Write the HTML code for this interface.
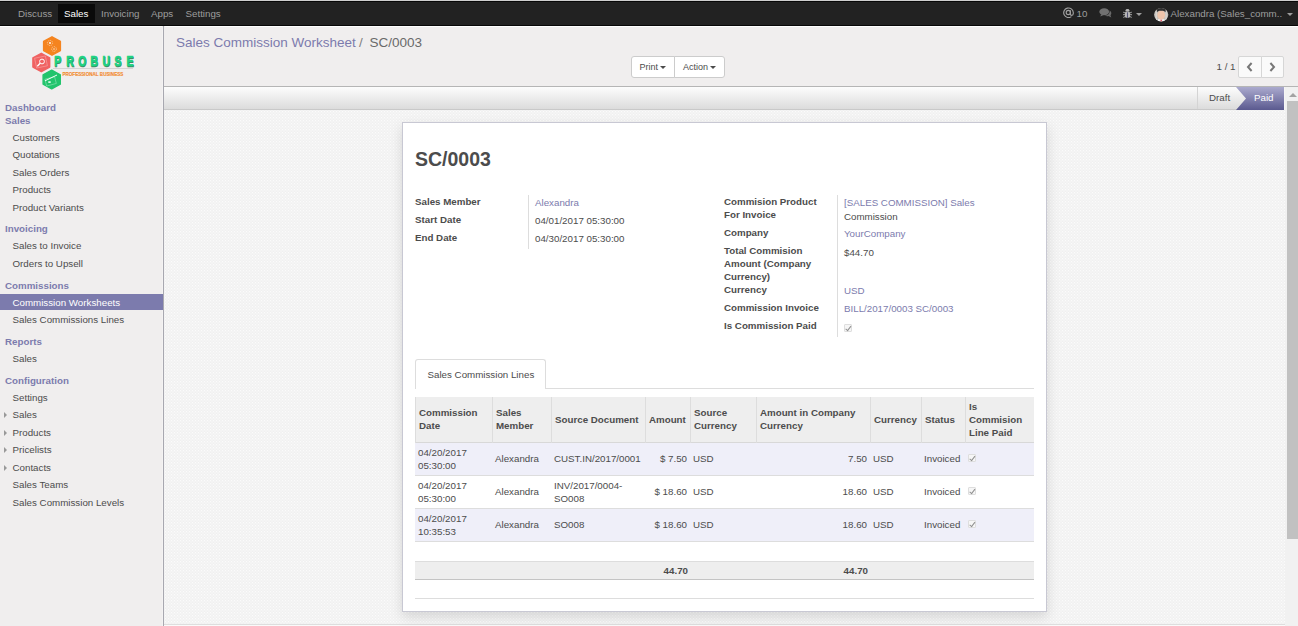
<!DOCTYPE html>
<html><head><meta charset="utf-8">
<style>
*{box-sizing:border-box}
html,body{margin:0;padding:0;width:1298px;height:626px;overflow:hidden;background:#f5f5f5;font-family:"Liberation Sans",sans-serif;font-size:9.75px;color:#4c4c4c}
.a{position:absolute}
.t{position:absolute;white-space:nowrap;line-height:13px;font-size:9.75px}
.b{font-weight:bold}
.p{color:#7c7bad}
/* top bar */
#top0{left:0;top:0;width:1298px;height:1px;background:#cfcfcf}
#nav{left:0;top:1px;width:1298px;height:25px;background:#222;border-top:1px solid #080808;border-bottom:1px solid #080808}
#navw{left:0;top:26px;width:1298px;height:1px;background:#fff}
.nt{position:absolute;top:7px;line-height:13px;color:#9d9d9d;white-space:nowrap}
/* sidebar */
#side{left:0;top:27px;width:163px;height:599px;background:#f0eeee}
#sideb{left:163px;top:26px;width:1px;height:600px;background:#a8a8b0;box-shadow:1px 0 0 #f4f3f3,-1px 0 0 #f4f3f3}
.sh{color:#7c7bad;font-weight:bold}
.si{color:#4c4c4c}
/* control panel */
#cp{left:164px;top:27px;width:1134px;height:60px;background:#f0eeee;border-bottom:1px solid #b5b5b5}
.btn{position:absolute;background:#fff;border:1px solid #ccc;height:22px}
.caret{display:inline-block;width:0;height:0;border-top:3px solid #4c4c4c;border-left:3px solid transparent;border-right:3px solid transparent;vertical-align:middle;margin-left:2px;position:relative;top:-1px}
/* statusbar */
#sb{left:164px;top:87px;width:1120px;height:23px;background:linear-gradient(#fdfdfd,#dcdcdc);border-bottom:1px solid #c9c9c9}
/* content bg */
#content{left:164px;top:110px;width:1121px;height:516px;
 background-color:#f4f4f4;
 }
#scroll{left:1285px;top:87px;width:13px;height:539px;background:#f1f1f1}
#thumb{left:1287px;top:101px;width:11px;height:438px;background:#c1c1c1}
/* sheet */
#sheet{left:402px;top:122px;width:645px;height:490px;background:#fff;border:1px solid #c8c8d3;box-shadow:0 5px 12px rgba(0,0,0,0.13)}
.vsep{position:absolute;width:1px;background:#ddd}
.hl{position:absolute;height:1px;background:#ddd}
.vd{position:absolute;width:1px;background:#ddd}
.chk{position:absolute;width:8px;height:8px;border:1px solid #dedede;background:#f6f6f6;border-radius:1px}
.chk:after{content:"";position:absolute;left:2.2px;top:-0.5px;width:2.2px;height:4.5px;border:solid #8f8f8f;border-width:0 1.4px 1.4px 0;transform:rotate(38deg)}
</style></head><body>

<div id="top0" class="a"></div>
<div id="nav" class="a"></div>
<div id="navw" class="a"></div>
<div class="a" style="left:58px;top:4px;width:37px;height:19px;background:#0a0a0a"></div>
<div class="nt" style="left:18px">Discuss</div>
<div class="nt" style="left:64px;color:#fff">Sales</div>
<div class="nt" style="left:101px">Invoicing</div>
<div class="nt" style="left:151px">Apps</div>
<div class="nt" style="left:185.5px">Settings</div>

<!-- right side of nav -->
<svg class="a" style="left:1063px;top:7px" width="11" height="11" viewBox="0 0 11 11">
 <circle cx="5.3" cy="5.5" r="2.1" fill="none" stroke="#a0a0a0" stroke-width="1.15"/>
 <path d="M8.4 9.6 A4.8 4.8 0 1 1 10.3 5.5 L10.3 6.4 C10.3 7.7 9.5 8.3 8.6 8.3 C7.7 8.3 7.4 7.6 7.4 6.9 L7.4 3.2" fill="none" stroke="#a0a0a0" stroke-width="1.15"/>
</svg>
<div class="nt" style="left:1076.5px;top:7px">10</div>
<svg class="a" style="left:1098.5px;top:8.3px" width="13" height="10" viewBox="0 0 13 10">
 <ellipse cx="5.2" cy="3.7" rx="4.9" ry="3.5" fill="#717171"/>
 <path d="M2.2 6.3 L1.3 8.6 L4.6 7" fill="#717171"/>
 <path d="M10.6 2.6 C12.5 3.6 13 5.9 11.5 7.3 L12.3 9.5 L9.5 8.1 C8.2 8.5 6.7 8.2 5.8 7.6 C8.8 7.6 11 5.6 10.6 2.6Z" fill="#6a6a6a"/>
</svg>
<svg class="a" style="left:1123px;top:8.6px" width="9" height="9" viewBox="0 0 9 9">
 <ellipse cx="4.5" cy="1.3" rx="1.9" ry="1.2" fill="#b4b4b4"/>
 <rect x="2" y="2.5" width="5" height="6.3" rx="1.4" fill="#b4b4b4"/>
 <path d="M0.2 3.2 L2 3.9 M8.8 3.2 L7 3.9 M0 5.7 L2 5.7 M9 5.7 L7 5.7 M0.3 8.4 L2 7.6 M8.7 8.4 L7 7.6" stroke="#b4b4b4" stroke-width="0.9"/>
 <path d="M4.5 3.3 L4.5 8.8" stroke="#4a4a70" stroke-width="0.9"/>
</svg>
<div class="a" style="left:1136px;top:13px;width:0;height:0;border-top:3.5px solid #9d9d9d;border-left:3.5px solid transparent;border-right:3.5px solid transparent"></div>
<svg class="a" style="left:1153.7px;top:7.5px" width="15" height="14" viewBox="0 0 15 14">
 <defs><clipPath id="av"><ellipse cx="7.2" cy="6.8" rx="7.1" ry="6.8"/></clipPath></defs>
 <ellipse cx="7.2" cy="6.8" rx="7.1" ry="6.8" fill="#c4c0bb"/>
 <g clip-path="url(#av)">
  <path d="M3.2 13.6 L4 11.2 L10.4 11.2 L11.2 13.6Z" fill="#f4f4f4"/>
  <rect x="6.4" y="11.6" width="1.6" height="2.2" fill="#e05a6a"/>
  <ellipse cx="7.2" cy="7" rx="3.9" ry="4.6" fill="#efc5ab"/>
  <path d="M2.9 4.5 L2.9 -1 L11.6 -1 L11.6 4.5 C11 3.3 10 2.8 7.2 2.8 C4.4 2.8 3.4 3.3 2.9 4.5Z" fill="#2e2e2e"/>
  <path d="M1.6 2 L3 4.5 L3 12 L1.5 12Z M12.8 2 L11.4 4.5 L11.4 12 L12.9 12Z" fill="#d8d4cf"/>
 </g>
</svg>
<div class="nt" style="left:1170.5px;top:7px">Alexandra (Sales_comm..</div>
<div class="a" style="left:1287px;top:13px;width:0;height:0;border-top:3.5px solid #9d9d9d;border-left:3.5px solid transparent;border-right:3.5px solid transparent"></div>

<!-- sidebar -->
<div id="side" class="a"></div>
<div id="sideb" class="a"></div>
<svg class="a" style="left:25px;top:32px" width="115" height="60" viewBox="25 32 115 60">
 <polygon points="52,36.8 60.4,41.4 60.4,50.6 52,55.2 43.6,50.6 43.6,41.4" fill="#f5841f" stroke="#f5841f" stroke-width="1.4" stroke-linejoin="round"/>
 <polygon points="41.3,53.3 49.7,57.9 49.7,67.1 41.3,71.7 32.9,67.1 32.9,57.9" fill="#f06262" stroke="#f06262" stroke-width="1.4" stroke-linejoin="round"/>
 <polygon points="51.7,70.1 60.3,74.8 60.3,84.2 51.7,88.9 43.1,84.2 43.1,74.8" fill="#22c46c" stroke="#22c46c" stroke-width="1.4" stroke-linejoin="round"/>
 <g fill="none" stroke="#fbc390" stroke-width="1">
  <circle cx="50" cy="43" r="2.6" stroke-dasharray="1.2 0.8"/>
  <circle cx="54" cy="49" r="2.4" stroke-dasharray="1.2 0.8"/>
 </g>
 <circle cx="50" cy="43" r="0.9" fill="#fff"/>
 <circle cx="54" cy="49" r="0.8" fill="#fde2c8"/>
 <g fill="none" stroke="#f7a3a3" stroke-width="0.6">
  <rect x="35.5" y="57" width="11" height="10" transform="rotate(-12 41 62)"/>
 </g>
 <circle cx="42" cy="61.5" r="2.4" fill="none" stroke="#fff" stroke-width="1"/>
 <path d="M40.2 63.3 L37.3 66.2" stroke="#fff" stroke-width="1.3"/>
 <g fill="none" stroke="#9fe8c0" stroke-width="0.5">
  <rect x="45.5" y="78" width="10" height="7" transform="rotate(-15 50 81)"/>
 </g>
 <path d="M45 80.8 L57 75" stroke="#f0fff6" stroke-width="1"/>
 <rect x="48.3" y="81.3" width="2.4" height="1.6" fill="#e8fff2"/>
 <g font-family="Liberation Sans" font-weight="bold" font-size="14.4" transform="scale(0.72,1)">
  <text x="75.8" y="66.9" fill="#3a8a62" stroke="#3a8a62" stroke-width="0.7">P</text>
  <text x="75.3" y="66.2" fill="#20d383" stroke="#20d383" stroke-width="0.7">P</text>
  <text x="92.6" y="66.9" fill="#3a8a62" stroke="#3a8a62" stroke-width="0.7">R</text>
  <text x="92.1" y="66.2" fill="#20d383" stroke="#20d383" stroke-width="0.7">R</text>
  <text x="109.2" y="66.9" fill="#3a8a62" stroke="#3a8a62" stroke-width="0.7">O</text>
  <text x="108.8" y="66.2" fill="#20d383" stroke="#20d383" stroke-width="0.7">O</text>
  <text x="126.1" y="66.9" fill="#3a8a62" stroke="#3a8a62" stroke-width="0.7">B</text>
  <text x="125.6" y="66.2" fill="#20d383" stroke="#20d383" stroke-width="0.7">B</text>
  <text x="142.9" y="66.9" fill="#3a8a62" stroke="#3a8a62" stroke-width="0.7">U</text>
  <text x="142.4" y="66.2" fill="#20d383" stroke="#20d383" stroke-width="0.7">U</text>
  <text x="159.5" y="66.9" fill="#3a8a62" stroke="#3a8a62" stroke-width="0.7">S</text>
  <text x="159.0" y="66.2" fill="#20d383" stroke="#20d383" stroke-width="0.7">S</text>
  <text x="176.3" y="66.9" fill="#3a8a62" stroke="#3a8a62" stroke-width="0.7">E</text>
  <text x="175.8" y="66.2" fill="#20d383" stroke="#20d383" stroke-width="0.7">E</text>
 </g>
 <rect x="53" y="68" width="80" height="1" fill="#d4d4d4"/>
 <text x="62.4" y="76.3" font-family="Liberation Sans" font-size="6" font-weight="bold" fill="#f28a2e" stroke="#f28a2e" stroke-width="0.15" textLength="61" lengthAdjust="spacingAndGlyphs">PROFESSIONAL BUSINESS</text>
</svg>

<div class="t sh" style="left:5px;top:100.6px">Dashboard</div>
<div class="t sh" style="left:5px;top:114px">Sales</div>
<div class="t si" style="left:12.5px;top:131px">Customers</div>
<div class="t si" style="left:12.5px;top:148px">Quotations</div>
<div class="t si" style="left:12.5px;top:166px">Sales Orders</div>
<div class="t si" style="left:12.5px;top:183px">Products</div>
<div class="t si" style="left:12.5px;top:201px">Product Variants</div>
<div class="t sh" style="left:5px;top:222px">Invoicing</div>
<div class="t si" style="left:12.5px;top:239px">Sales to Invoice</div>
<div class="t si" style="left:12.5px;top:257px">Orders to Upsell</div>
<div class="t sh" style="left:5px;top:279px">Commissions</div>
<div class="a" style="left:0;top:294px;width:163px;height:16px;background:#7c7bad"></div>
<div class="t" style="left:12.5px;top:296px;color:#fff">Commission Worksheets</div>
<div class="t si" style="left:12.5px;top:313px">Sales Commissions Lines</div>
<div class="t sh" style="left:5px;top:335px">Reports</div>
<div class="t si" style="left:12.5px;top:352px">Sales</div>
<div class="t sh" style="left:5px;top:374px">Configuration</div>
<div class="t si" style="left:12.5px;top:390.5px">Settings</div>
<div class="t si" style="left:12.5px;top:407.5px">Sales</div>
<div class="t si" style="left:12.5px;top:425.5px">Products</div>
<div class="t si" style="left:12.5px;top:442.5px">Pricelists</div>
<div class="t si" style="left:12.5px;top:460.5px">Contacts</div>
<div class="t si" style="left:12.5px;top:477.5px">Sales Teams</div>
<div class="t si" style="left:12.5px;top:495.5px">Sales Commission Levels</div>
<div class="a" style="left:4px;top:412px;width:0;height:0;border-left:3px solid #999;border-top:3px solid transparent;border-bottom:3px solid transparent"></div>
<div class="a" style="left:4px;top:430px;width:0;height:0;border-left:3px solid #999;border-top:3px solid transparent;border-bottom:3px solid transparent"></div>
<div class="a" style="left:4px;top:447px;width:0;height:0;border-left:3px solid #999;border-top:3px solid transparent;border-bottom:3px solid transparent"></div>
<div class="a" style="left:4px;top:465px;width:0;height:0;border-left:3px solid #999;border-top:3px solid transparent;border-bottom:3px solid transparent"></div>

<!-- control panel -->
<div id="cp" class="a"></div>
<div class="t p" style="left:176px;top:34px;font-size:13.5px;line-height:18px">Sales Commission Worksheet<span style="color:#808080;margin-left:-0.7px"> / </span><span style="color:#6a6a6a;margin-left:3px">SC/0003</span></div>
<div class="btn" style="left:631px;top:56px;width:44px;border-radius:3px 0 0 3px"></div>
<div class="btn" style="left:674px;top:56px;width:51px;border-radius:0 3px 3px 0"></div>
<div class="t" style="left:639.5px;top:60.5px;font-size:9px">Print</div><div class="a" style="left:660px;top:66px;width:0;height:0;border-top:3px solid #4c4c4c;border-left:3px solid transparent;border-right:3px solid transparent"></div>
<div class="t" style="left:683px;top:60.5px;font-size:9px">Action</div><div class="a" style="left:710px;top:66px;width:0;height:0;border-top:3px solid #4c4c4c;border-left:3px solid transparent;border-right:3px solid transparent"></div>
<div class="t" style="left:1216.5px;top:59.5px">1 / 1</div>
<div class="btn" style="left:1238px;top:56px;width:24px;height:22px;border-radius:2px 0 0 2px;background:#fafafa;border-color:#d6d6d6"></div>
<div class="btn" style="left:1261px;top:56px;width:23px;height:22px;border-radius:0 2px 2px 0;background:#fafafa;border-color:#d6d6d6"></div>
<svg class="a" style="left:1246px;top:62.4px" width="8" height="10" viewBox="0 0 8 10"><path d="M5.6 1 L2 5 L5.6 9" fill="none" stroke="#777" stroke-width="2"/></svg>
<svg class="a" style="left:1268px;top:62.4px" width="8" height="10" viewBox="0 0 8 10"><path d="M2.4 1 L6 5 L2.4 9" fill="none" stroke="#777" stroke-width="2"/></svg>

<!-- statusbar -->
<div id="sb" class="a"></div>
<div class="a" style="left:1197px;top:87px;width:1px;height:22px;background:#d4d4d4"></div>
<svg class="a" style="left:1236px;top:87px" width="48" height="23" viewBox="0 0 48 23">
 <defs><linearGradient id="pg" x1="0" y1="0" x2="0" y2="1"><stop offset="0" stop-color="#abaace"/><stop offset="1" stop-color="#5a598f"/></linearGradient></defs>
 <path d="M0 0 L48 0 L48 23 L0 23 L10 11.5Z" fill="url(#pg)"/>
</svg>
<div class="t" style="left:1209px;top:91px">Draft</div>
<div class="t" style="left:1254px;top:91px;color:#fff">Paid</div>

<!-- content -->
<svg id="content" class="a" width="1121" height="516" shape-rendering="crispEdges">
 <defs><pattern id="bgp" x="1" y="1" width="3" height="3" patternUnits="userSpaceOnUse">
  <rect width="3" height="3" fill="#f4f4f4"/>
  <rect x="0" y="0" width="1" height="1" fill="#fbfbfb"/>
  <rect x="1" y="0" width="2" height="1" fill="#f2f2f2"/>
  <rect x="0" y="2" width="1" height="1" fill="#f0f0f0"/>
 </pattern></defs>
 <rect width="1121" height="516" fill="url(#bgp)"/>
</svg>
<div id="scroll" class="a"></div>
<div class="a" style="left:1288.5px;top:93px;width:0;height:0;border-bottom:4px solid #a3a3a3;border-left:4px solid transparent;border-right:4px solid transparent"></div>
<div id="thumb" class="a"></div>
<div class="a" style="left:164px;top:624px;width:1121px;height:1px;background:#dedede"></div>
<div class="a" style="left:164px;top:625px;width:1121px;height:1px;background:#fafafa"></div>

<div id="sheet" class="a"></div>
<div class="t" style="left:415px;top:147px;font-size:19.5px;line-height:24px;font-weight:bold">SC/0003</div>

<div class="t b" style="left:415px;top:195px">Sales Member</div>
<div class="t b" style="left:415px;top:213.4px">Start Date</div>
<div class="t b" style="left:415px;top:231px">End Date</div>
<div class="vsep" style="left:528px;top:195px;height:54px"></div>
<div class="t p" style="left:535px;top:195.7px">Alexandra</div>
<div class="t" style="left:535px;top:214px">04/01/2017 05:30:00</div>
<div class="t" style="left:535px;top:231.7px">04/30/2017 05:30:00</div>

<div class="t b" style="left:724px;top:194.6px">Commision Product</div>
<div class="t b" style="left:724px;top:207.8px">For Invoice</div>
<div class="t b" style="left:724px;top:225.8px">Company</div>
<div class="t b" style="left:724px;top:243.7px">Total Commision</div>
<div class="t b" style="left:724px;top:256.6px">Amount (Company</div>
<div class="t b" style="left:724px;top:269.5px">Currency)</div>
<div class="t b" style="left:724px;top:282.6px">Currency</div>
<div class="t b" style="left:724px;top:300.7px">Commission Invoice</div>
<div class="t b" style="left:724px;top:318.7px">Is Commission Paid</div>
<div class="vsep" style="left:837px;top:195px;height:142px"></div>
<div class="t p" style="left:844px;top:195.9px">[SALES COMMISSION] Sales</div>
<div class="t" style="left:844px;top:209.5px">Commission</div>
<div class="t p" style="left:844px;top:227.2px">YourCompany</div>
<div class="t" style="left:844px;top:245.5px">$44.70</div>
<div class="t p" style="left:844px;top:283.7px">USD</div>
<div class="t p" style="left:844px;top:301.7px">BILL/2017/0003 SC/0003</div>
<div class="chk" style="left:844px;top:324px"></div>

<!-- tabs -->
<div class="hl" style="left:415px;top:388px;width:619px"></div>
<div class="a" style="left:415px;top:359px;width:131px;height:30px;background:#fff;border:1px solid #ddd;border-bottom:none;border-radius:3px 3px 0 0"></div>
<div class="t" style="left:427.5px;top:368px">Sales Commission Lines</div>

<!-- table -->
<div class="a" style="left:415px;top:397px;width:619px;height:46px;background:#eee;border-bottom:1px solid #d8d8d8"></div>
<div class="a" style="left:415px;top:443px;width:619px;height:33px;background:#efeff9"></div>
<div class="a" style="left:415px;top:509px;width:619px;height:33px;background:#efeff9"></div>
<div class="hl" style="left:415px;top:475px;width:619px"></div>
<div class="hl" style="left:415px;top:508px;width:619px"></div>
<div class="hl" style="left:415px;top:541px;width:619px"></div>
<div class="vd" style="left:415px;top:397px;height:46px"></div>
<div class="vd" style="left:492px;top:397px;height:46px"></div>
<div class="vd" style="left:551px;top:397px;height:46px"></div>
<div class="vd" style="left:645px;top:397px;height:46px"></div>
<div class="vd" style="left:690px;top:397px;height:46px"></div>
<div class="vd" style="left:756px;top:397px;height:46px"></div>
<div class="vd" style="left:870px;top:397px;height:46px"></div>
<div class="vd" style="left:921px;top:397px;height:46px"></div>
<div class="vd" style="left:965px;top:397px;height:46px"></div>

<div class="t b" style="left:419px;top:406px">Commission</div>
<div class="t b" style="left:419px;top:419px">Date</div>
<div class="t b" style="left:496px;top:406px">Sales</div>
<div class="t b" style="left:496px;top:419px">Member</div>
<div class="t b" style="left:555px;top:412.5px">Source Document</div>
<div class="t b" style="left:649px;top:412.5px">Amount</div>
<div class="t b" style="left:694px;top:406px">Source</div>
<div class="t b" style="left:694px;top:419px">Currency</div>
<div class="t b" style="left:760px;top:406px">Amount in Company</div>
<div class="t b" style="left:760px;top:419px">Currency</div>
<div class="t b" style="left:874px;top:412.5px">Currency</div>
<div class="t b" style="left:925px;top:412.5px">Status</div>
<div class="t b" style="left:969px;top:400px">Is</div>
<div class="t b" style="left:969px;top:412.5px">Commision</div>
<div class="t b" style="left:969px;top:425.5px">Line Paid</div>

<!-- rows -->
<div class="t" style="left:418px;top:446px">04/20/2017</div>
<div class="t" style="left:418px;top:459px">05:30:00</div>
<div class="t" style="left:495px;top:452px">Alexandra</div>
<div class="t" style="left:554px;top:452px">CUST.IN/2017/0001</div>
<div class="t" style="left:646px;top:452px;width:41px;text-align:right">$ 7.50</div>
<div class="t" style="left:693px;top:452px">USD</div>
<div class="t" style="left:757px;top:452px;width:110px;text-align:right">7.50</div>
<div class="t" style="left:873px;top:452px">USD</div>
<div class="t" style="left:924px;top:452px">Invoiced</div>
<div class="chk" style="left:968px;top:454px"></div>

<div class="t" style="left:418px;top:479px">04/20/2017</div>
<div class="t" style="left:418px;top:492px">05:30:00</div>
<div class="t" style="left:495px;top:485px">Alexandra</div>
<div class="t" style="left:554px;top:479px">INV/2017/0004-</div>
<div class="t" style="left:554px;top:492px">SO008</div>
<div class="t" style="left:646px;top:485px;width:41px;text-align:right">$ 18.60</div>
<div class="t" style="left:693px;top:485px">USD</div>
<div class="t" style="left:757px;top:485px;width:110px;text-align:right">18.60</div>
<div class="t" style="left:873px;top:485px">USD</div>
<div class="t" style="left:924px;top:485px">Invoiced</div>
<div class="chk" style="left:968px;top:487px"></div>

<div class="t" style="left:418px;top:512px">04/20/2017</div>
<div class="t" style="left:418px;top:525px">10:35:53</div>
<div class="t" style="left:495px;top:518px">Alexandra</div>
<div class="t" style="left:554px;top:518px">SO008</div>
<div class="t" style="left:646px;top:518px;width:41px;text-align:right">$ 18.60</div>
<div class="t" style="left:693px;top:518px">USD</div>
<div class="t" style="left:757px;top:518px;width:110px;text-align:right">18.60</div>
<div class="t" style="left:873px;top:518px">USD</div>
<div class="t" style="left:924px;top:518px">Invoiced</div>
<div class="chk" style="left:968px;top:520px"></div>

<!-- footer -->
<div class="a" style="left:415px;top:561px;width:619px;height:19px;background:#eee;border-top:1px solid #ddd;border-bottom:1px solid #c4c4c4"></div>
<div class="t b" style="left:646px;top:564px;width:42px;text-align:right">44.70</div>
<div class="t b" style="left:757px;top:564px;width:111px;text-align:right">44.70</div>
<div class="hl" style="left:415px;top:598px;width:619px"></div>

</body></html>
